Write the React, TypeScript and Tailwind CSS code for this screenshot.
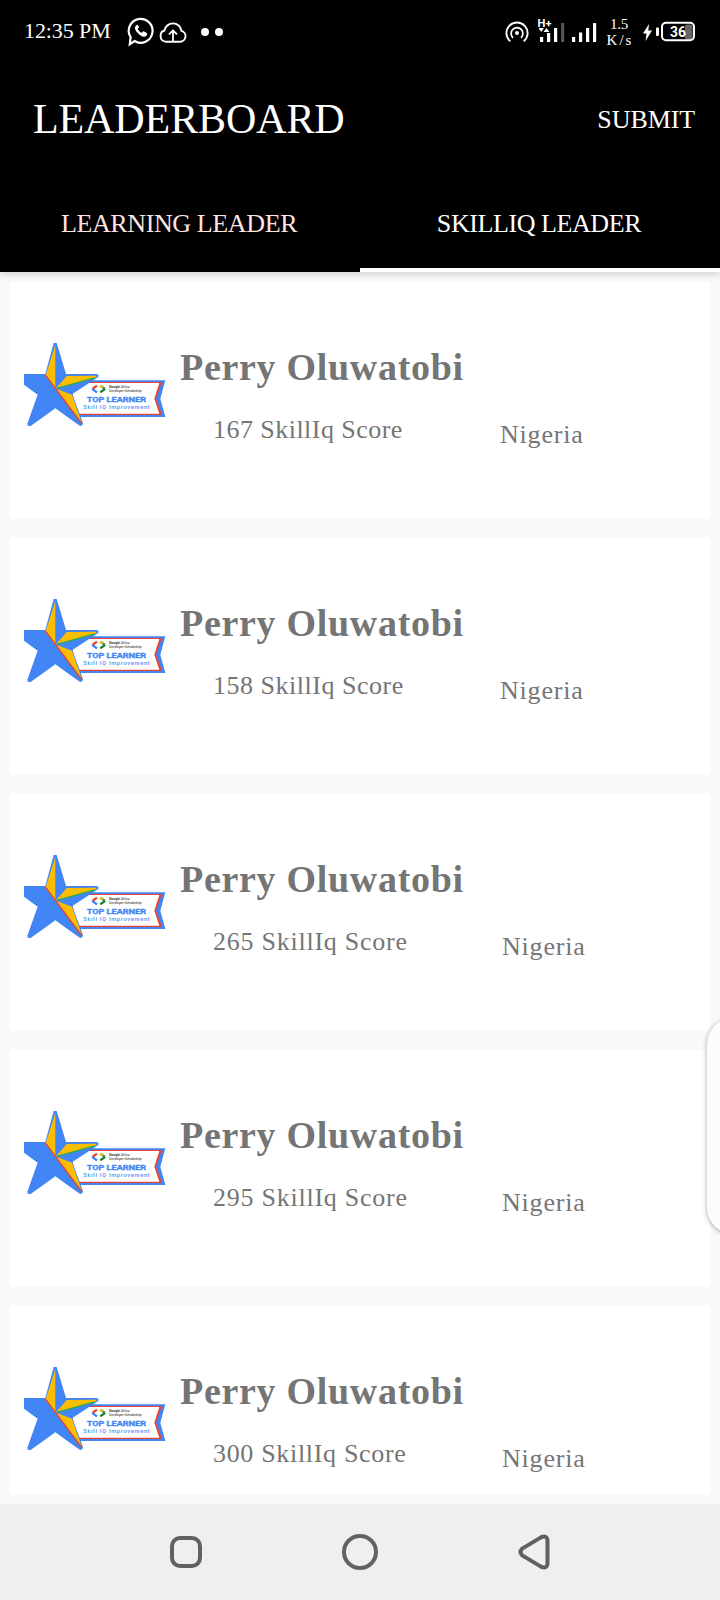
import React from "react";

type Leader = { score: number; scoreClass: string; countryClass: string };

const leaders: Leader[] = [
  { score: 167, scoreClass: "tracking-[0.46px]", countryClass: "ml-[490px]" },
  { score: 158, scoreClass: "tracking-[0.52px]", countryClass: "ml-[490px]" },
  { score: 265, scoreClass: "tracking-[0.75px]", countryClass: "ml-[492px]" },
  { score: 295, scoreClass: "tracking-[0.75px]", countryClass: "ml-[492px]" },
  { score: 300, scoreClass: "tracking-[0.68px]", countryClass: "ml-[492px]" },
];

function Badge() {
  return (
    <svg className="mt-[61px] h-[84px] w-[142px] shrink-0" viewBox="72 69 426 252">
      <path d="M200 181H496L481 236L496 291H225Z" fill="#4285f4" />
      <path d="M215 186H486L468 236L486 285H225Z" fill="#ea4335" />
      <path d="M215 189H478L463 236L478 281H225Z" fill="#fff" />
      <path d="M72 162H136L161 69H170L198 162H290Q298 164 296 170L217 222L249 310Q248 318 240 318L166 265L92 318Q82 319 82 311L113 224L72 194Z" fill="#4285f4" />
      <path d="M166 74V205L137 166Z" fill="#fbbc04" />
      <path d="M168 205L200 168L292 167L284 174Z" fill="#fbbc04" />
      <path d="M168 206L284 174" stroke="#34a853" strokeWidth="4" />
      <path d="M168 206L216 224L245 308Z" fill="#fbbc04" />
      <path d="M137 166L245 311" stroke="#ea4335" strokeWidth="4" />
      <g fill="none" strokeWidth="7">
        <path d="M291 197L277 207" stroke="#ea4335" />
        <path d="M277 207L291 217" stroke="#4285f4" />
        <path d="M301 197L315 207" stroke="#34a853" />
        <path d="M315 207L301 217" stroke="#188038" />
        <path d="M301 197L308 202" stroke="#fbbc04" />
      </g>
      <g fontFamily="Roboto, sans-serif">
        <text x="327" y="204" fontSize="11" fill="#444" textLength="62"><tspan fontWeight="700">Google</tspan> Africa</text>
        <text x="327" y="216" fontSize="11" fill="#333" textLength="98">Developer Scholarship</text>
        <text x="260" y="246" fontSize="24" fontWeight="700" fill="#4285f4" stroke="#4285f4" strokeWidth="1" textLength="178" lengthAdjust="spacingAndGlyphs">TOP LEARNER</text>
        <text x="250" y="266" fontSize="17" fontWeight="600" fill="#5a95f5" textLength="199">Skill IQ Improvement</text>
      </g>
    </svg>
  );
}

function Card({ score, scoreClass, countryClass }: Leader) {
  return (
    <article className="flex h-[236px] shrink-0 bg-white pl-[14px] text-[#757575]">
      <Badge />
      <div className="-ml-[156px] flex w-full flex-col pt-[63px] whitespace-nowrap">
        <h2 className="ml-[170px] h-[44px] text-[38px] leading-[44px] font-bold tracking-[0.7px]">Perry Oluwatobi</h2>
        <div className="grid pt-[26px] text-[26px] leading-[30px]">
          <p className={"col-start-1 row-start-1 ml-[203px] " + scoreClass}>{score} SkillIq Score</p>
          <p className={"col-start-1 row-start-1 mt-[5px] tracking-[0.8px] " + countryClass}>Nigeria</p>
        </div>
      </div>
    </article>
  );
}

function StatusBar() {
  return (
    <div className="flex h-16 shrink-0">
      <span className="mt-[18px] ml-6 w-[103px] text-[22px] leading-[26px] tracking-[-0.1px] whitespace-nowrap">12:35 PM</span>
      <svg className="h-16 w-[97px] shrink-0" viewBox="127 0 97 64" fill="none" stroke="#fff">
        <path d="M134.5 41A11.9 11.9 0 1 0 130.6 37.2L129.8 44.3Z" strokeWidth="2.2" />
        <path d="M136.5 25.2c-3 2-1.2 5.2 1.5 8.1 3 3.2 6.3 4.6 8.5 2.4.8-1 .9-2.2.2-2.7l-3-1.7c-.9-.4-1.5 1.8-2.2 1.4-1.7-.8-3.1-2.1-3.8-3.6-.3-.7 1.6-1.1 1.3-2.1l-1.2-2c-.3-.4-.9-.2-1.3.2z" fill="#fff" stroke="none" />
        <path d="M166 41.7h14a5.5 5.5 0 0 0 1.5-10.8 8.7 8.7 0 0 0-17.2-.2c-2.3.3-3.7 2.6-3.7 5.3 0 3.5 2.3 5.7 5.4 5.7z" strokeWidth="1.9" />
        <path d="M173 41V31M169 34.4L173 30.4L177 34.4" strokeWidth="1.8" />
        <circle cx="205" cy="32" r="4" fill="#fff" stroke="none" />
        <circle cx="219" cy="32" r="4" fill="#fff" stroke="none" />
      </svg>
      <svg className="ml-auto h-16 w-[100px] shrink-0" viewBox="500 0 100 64">
        <circle cx="517" cy="33" r="2" fill="#fff" />
        <path d="M510.3 41.3A10.6 10.6 0 1 1 523.7 41.3" fill="none" stroke="#fff" strokeWidth="1.9" />
        <path d="M513 37.8A5.9 5.9 0 1 1 521 37.8" fill="none" stroke="#fff" strokeWidth="1.7" />
        <text x="537.5" y="26.5" fill="#fff" fontFamily="Roboto, sans-serif" fontSize="11" fontWeight="700" textLength="14" lengthAdjust="spacingAndGlyphs">H+</text>
        <path d="M538.5 28H544L541.2 32ZM543.5 32H549.5L546.5 28ZM540 37h3.2v5H540zM547 33h3.2v9H547zM554 28h3.2v14H554zM572 37h3.2v5H572zM579 32.5h3.2V42H579zM586 28h3.2v14H586zM593 23h3.2v19H593z" fill="#fff" />
        <path d="M561 23h3.2v19H561z" fill="#555" />
      </svg>
      <div className="flex w-[40px] flex-col items-center pt-[16px] text-[15px] leading-[16px]">
        <span className="-ml-[2px] tracking-[-0.3px]">1.5</span>
        <span className="tracking-[2px]">K/s</span>
      </div>
      <svg className="mr-[22px] h-16 w-[58px] shrink-0" viewBox="640 0 58 64" fill="#fff">
        <path d="M649 24L643 33.5H646.5L645.5 41L652 30.5H648.3Z" />
        <rect x="656" y="27.5" width="3" height="8.5" rx="1" />
        <rect x="685" y="24.5" width="7.5" height="15" rx="2" fill="#666" />
        <rect x="662" y="22.8" width="32" height="17.4" rx="4" fill="none" stroke="#fff" strokeWidth="2" />
        <text x="670" y="37" fontFamily="Roboto, sans-serif" fontSize="15.5" fontWeight="700" textLength="16" lengthAdjust="spacingAndGlyphs">36</text>
      </svg>
    </div>
  );
}

function Header() {
  return (
    <header className="relative z-10 flex h-[272px] shrink-0 flex-col bg-black text-white shadow-[0_2px_8px_rgba(0,0,0,0.18)]">
      <StatusBar />
      <div className="flex h-[112px] shrink-0 justify-between pr-[25px] pl-[33px]">
        <h1 className="mt-[31px] text-[42px] leading-[48px] tracking-[-0.1px]">LEADERBOARD</h1>
        <button className="mt-[41px] self-start text-[26px] leading-[30px] tracking-[-0.1px]">SUBMIT</button>
      </div>
      <nav className="grid h-24 grid-cols-2 text-[26px] leading-[30px] whitespace-nowrap">
        <button className="flex justify-center pt-[33px] pr-[2px] text-[#ffe4e1] tracking-[-0.38px]">LEARNING LEADER</button>
        <button className="flex justify-center border-b-4 border-white pt-[33px] pr-[2px] tracking-[-0.42px]">SKILLIQ LEADER</button>
      </nav>
    </header>
  );
}

export default function App() {
  return (
    <div className="relative flex h-[1600px] w-[720px] flex-col overflow-hidden bg-[#fafafa] font-['Liberation_Serif',serif]">
      <Header />
      <main className="mx-[10px] mt-[10px] mb-[10px] flex min-h-0 flex-1 flex-col gap-5 overflow-hidden">
        {leaders.map((leader) => (
          <Card key={leader.score} {...leader} />
        ))}
      </main>
      <div className="absolute top-[1018px] -right-[40px] h-[216px] w-[53px] rounded-[30px] bg-[#fcfcfc] shadow-[0_1px_5px_rgba(0,0,0,0.35)]" />
      <footer className="flex h-24 shrink-0 bg-[#efefef]">
        <svg className="h-24 w-full" viewBox="0 1504 720 96" fill="none" stroke="#616161" strokeWidth="4">
          <rect x="172" y="1538" width="28" height="28" rx="8" />
          <circle cx="360" cy="1552" r="16" />
          <path d="M522.2 1548.6L540.5 1537.6Q546.8 1534.5 547.5 1540.5V1563.5Q546.8 1569.5 540.5 1566.4L522.2 1555.4Q518.8 1552 522.2 1548.6Z" strokeLinejoin="round" />
        </svg>
      </footer>
    </div>
  );
}
